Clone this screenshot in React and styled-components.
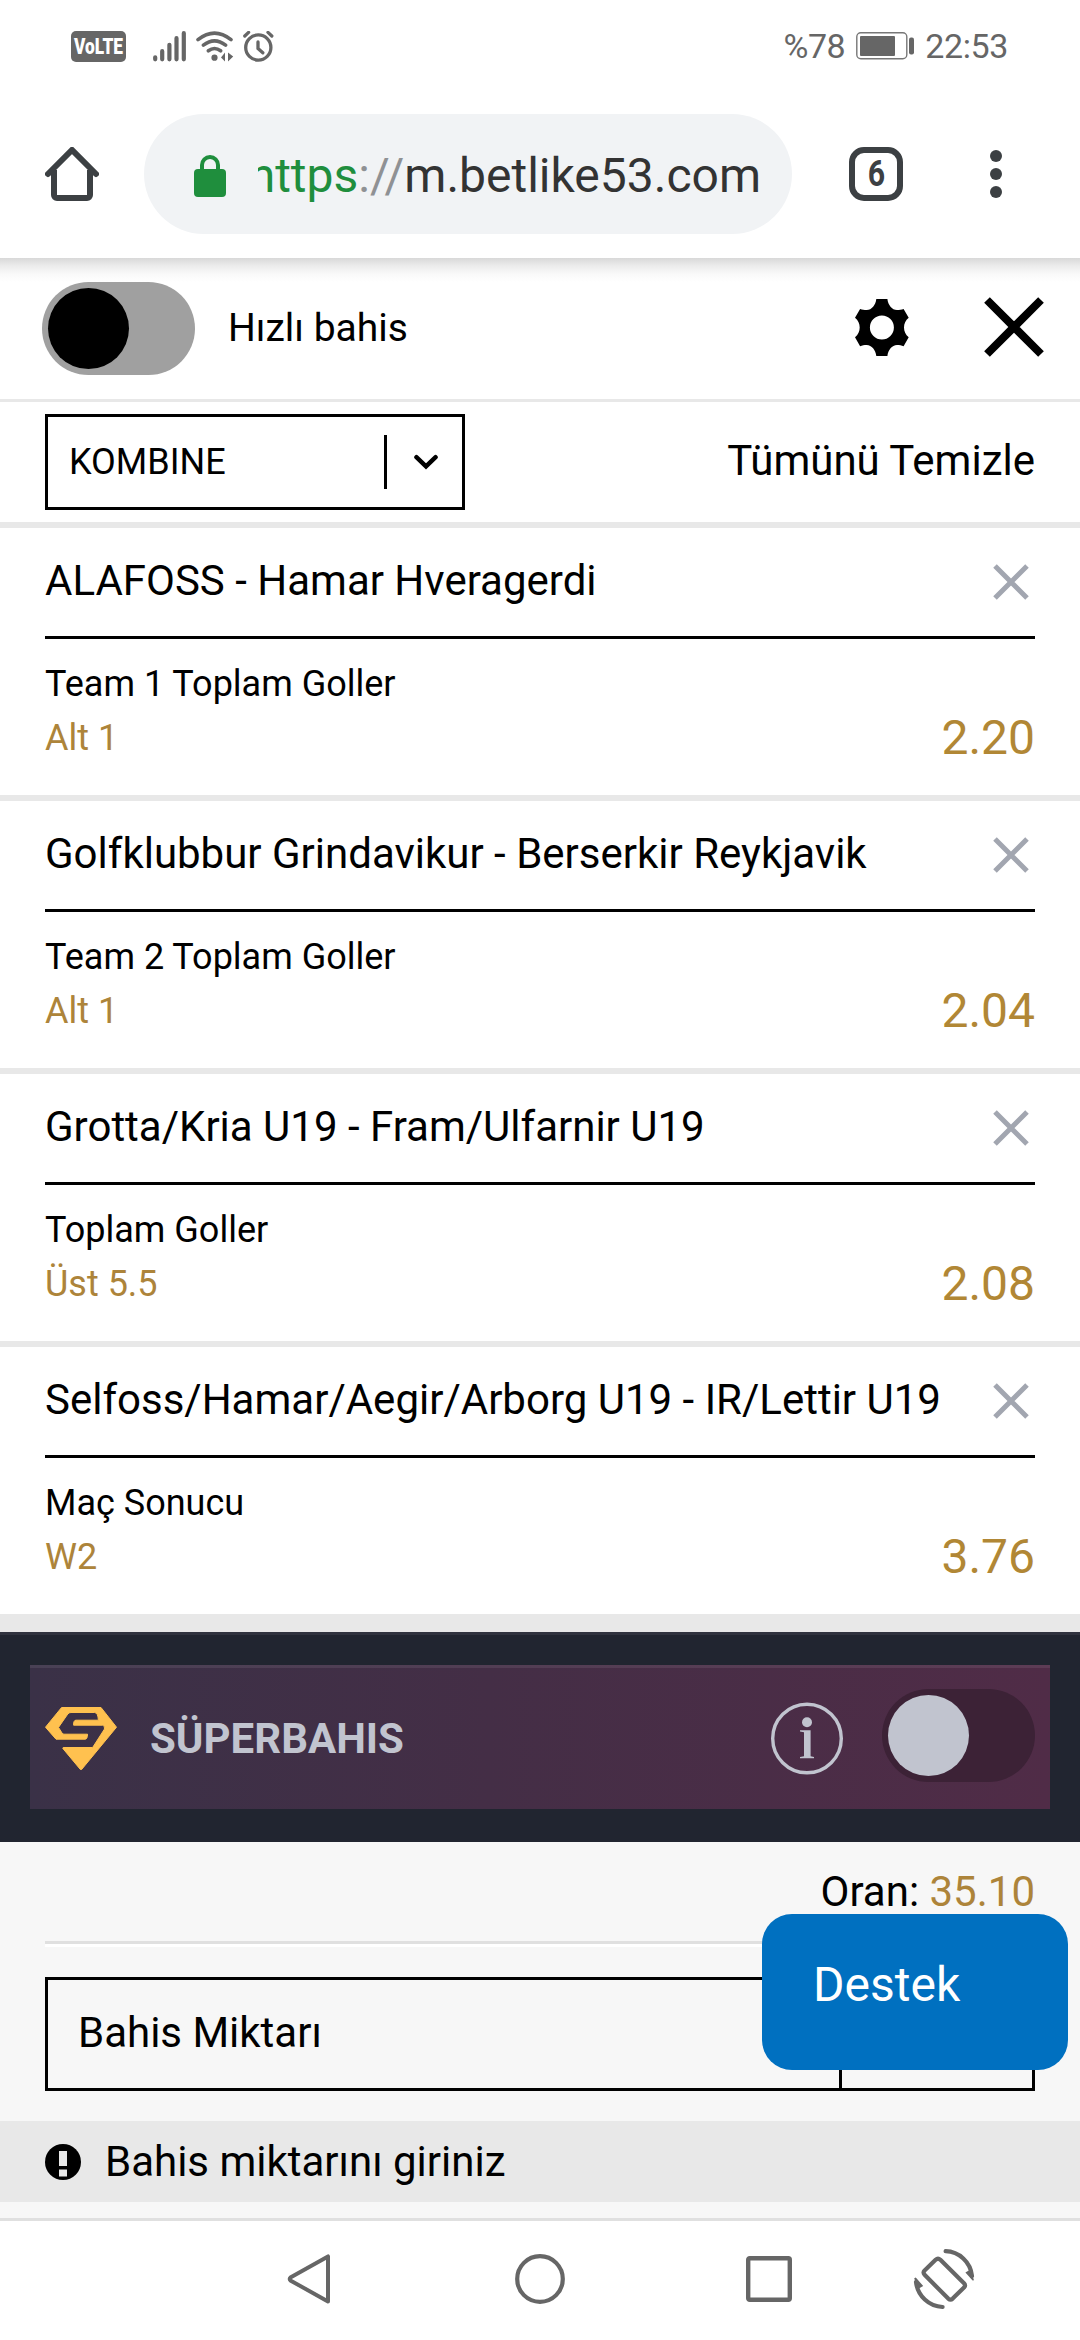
import React, { useState } from 'react';
import styled, { createGlobalStyle } from 'styled-components';

const GlobalStyle = createGlobalStyle`
    * {
        box-sizing: border-box;
    }

    body {
        margin: 0;
        background: #fff;
        font-family: Roboto, sans-serif;
        color: #000;
    }

    svg {
        display: block;
        flex: none;
    }
`;

// Styled Components
const Screen = styled.div`
    position: relative;
    width: 1080px;
    height: 2340px;
    overflow: hidden;
    background: #fff;
`;

const StatusBar = styled.div`
    display: flex;
    justify-content: space-between;
    align-items: center;
    height: 92px;
    padding: 0 72px 0 71px;
    color: #666;
    font-size: 34px;
    letter-spacing: -0.4px;
`;

const StatusGroup = styled.div`
    display: flex;
    align-items: center;
    gap: ${(props) => props.$gap}px;
`;

const SignalGroup = styled.div`
    padding-left: 18px;
`;

const BrowserBar = styled.div`
    display: flex;
    align-items: center;
    height: 166px;
    padding: 0 78px 2px 45px;
`;

const AddressBar = styled.div`
    display: flex;
    align-items: center;
    width: 648px;
    height: 120px;
    margin-left: 45px;
    padding: 3px 31px 0 50px;
    border-radius: 60px;
    background: #f1f3f5;
`;

/* Long address keeps its end visible, the start is cut */
const Address = styled.div`
    flex: 1;
    display: flex;
    justify-content: flex-end;
    overflow: hidden;
    margin-left: 32px;
    font-size: 48px;
    line-height: 60px;
    white-space: nowrap;
    color: #333;
`;

const Scheme = styled.span`
    color: #1f8e3d;
`;

const Slashes = styled.span`
    color: #8f9194;
`;

const TabCount = styled.div`
    display: flex;
    justify-content: center;
    align-items: center;
    width: 54px;
    height: 54px;
    margin-left: 57px;
    border: 6px solid #3c4043;
    border-radius: 15px;
    color: #3c4043;
    font-size: 36px;
    font-weight: 700;

    span {
        transform: scaleX(0.84);
    }
`;

const MenuDots = styled.div`
    display: flex;
    flex-direction: column;
    gap: 6px;
    margin-left: 87px;

    i {
        width: 12px;
        height: 12px;
        border-radius: 50%;
        background: #3c4043;
    }
`;

const QuickBetBar = styled.div`
    display: flex;
    align-items: center;
    height: 144px;
    padding: 0 36px 0 42px;
    border-bottom: 3px solid #e8e8e8;
    background: linear-gradient(to bottom, #d8d8d8 0, #ececec 8px, #f9f9f9 16px, #fff 24px);
`;

const Toggle = styled.button`
    display: flex;
    align-items: center;
    justify-content: ${(props) => (props.$on ? 'flex-end' : 'flex-start')};
    width: 153px;
    height: 93px;
    padding: 0 6px;
    border: none;
    border-radius: 46.5px;
    background: ${(props) => props.$track};
    cursor: pointer;

    &::before {
        content: '';
        width: 81px;
        height: 81px;
        border-radius: 50%;
        background: ${(props) => props.$knob};
    }
`;

const QuickBetLabel = styled.span`
    flex: 1;
    margin-left: 33px;
    padding-bottom: 2px;
    font-size: 39px;
`;

const HeaderIcons = styled.div`
    display: flex;
    align-items: center;
    gap: 75px;
    padding-bottom: 3px;
`;

const TypeBar = styled.div`
    display: flex;
    justify-content: space-between;
    align-items: center;
    height: 126px;
    padding: 0 45px;
    border-bottom: 6px solid #e8e8e8;
`;

const Select = styled.div`
    display: flex;
    align-items: center;
    width: 420px;
    height: 96px;
    padding: 0 24px 0 21px;
    border: 3px solid #000;
    font-size: 36px;
`;

const SelectValue = styled.span`
    flex: 1;
`;

const SelectDivider = styled.span`
    width: 3px;
    height: 54px;
    margin-right: 27px;
    background: #000;
`;

const ClearAll = styled.span`
    padding-bottom: 3px;
    font-size: 42px;
`;

const BetCard = styled.div`
    height: 273px;
    padding: 0 45px;
    border-bottom: 6px solid #e8e8e8;
`;

const BetTitle = styled.div`
    display: flex;
    justify-content: space-between;
    align-items: center;
    height: 111px;
    padding: 0 5px 3px 0;
    border-bottom: 3px solid #000;
    font-size: 42px;
    white-space: nowrap;

    svg {
        margin-top: 2px;
    }
`;

const BetBody = styled.div`
    display: flex;
    justify-content: space-between;
    align-items: flex-end;
    padding-top: 18px;
    font-size: 36px;
    line-height: 54px;
`;

const Pick = styled.div`
    color: #ad843a;
`;

const Odds = styled.div`
    color: #b18735;
    font-size: 48px;
    line-height: 54px;
`;

const ListEnd = styled.div`
    height: 12px;
    background: #e8e8e8;
`;

const SuperSection = styled.div`
    height: 210px;
    padding: 30px;
    border-top: 3px solid #30323e;
    background: #212530;
`;

const SuperPanel = styled.div`
    display: flex;
    align-items: center;
    height: 144px;
    padding: 0 15px;
    border-top: 3px solid rgba(255, 255, 255, 0.08);
    background: linear-gradient(to right, #3a3147, #442e46 45%, #502c47) border-box;
`;

const SuperLabel = styled.span`
    flex: 1;
    margin-left: 33px;
    color: #c1c4cf;
    font-size: 42px;
    font-weight: 700;
`;

const SuperToggle = styled(Toggle)`
    margin: 0 0 6px 39px;
`;

const StakeSection = styled.div`
    height: 279px;
    padding: 0 45px;
    background: #f7f7f7;
`;

const TotalRow = styled.div`
    display: flex;
    justify-content: flex-end;
    align-items: center;
    height: 102px;
    border-bottom: 3px solid #e0e0e0;
    box-shadow: 0 3px 0 #fff;
    font-size: 42px;
    white-space: pre;

    b {
        color: #ad843a;
        font-weight: 400;
    }
`;

const StakeField = styled.div`
    display: flex;
    align-items: center;
    height: 114px;
    margin-top: 33px;
    border: 3px solid #000;
    font-size: 42px;
`;

const StakeLabel = styled.span`
    flex: 1;
    padding: 0 0 3px 30px;
`;

const StakeSide = styled.span`
    width: 193px;
    height: 108px;
    border-left: 3px solid #000;
`;

const Notice = styled.div`
    display: flex;
    align-items: center;
    gap: 24px;
    height: 81px;
    padding: 0 45px;
    background: #e8e8e8;
    font-size: 42px;
`;

const NoticeFoot = styled.div`
    height: 19px;
    background: #f7f7f7;
    border-bottom: 3px solid #e0e0e0;
`;

const NavBar = styled.div`
    display: grid;
    grid-template-columns: 231px 232px 226px 124px;
    justify-items: center;
    align-items: center;
    height: 119px;
    padding: 0 0 3px 193px;
`;

const SupportButton = styled.button`
    position: absolute;
    left: 762px;
    top: 1914px;
    width: 306px;
    height: 156px;
    padding: 0 0 16px 51px;
    border: none;
    border-radius: 30px;
    background: #0070c0;
    color: #fff;
    font-family: inherit;
    font-size: 48px;
    text-align: left;
`;

// Icons
const VolteIcon = () => (
    <svg width="55" height="31" viewBox="0 0 55 31" overflow="visible">
        <rect width="55" height="31" rx="5" fill="#666" />
        <text
            x="3"
            y="23"
            fill="#fff"
            fontFamily="Roboto, sans-serif"
            fontWeight="900"
            fontSize="22.5"
            letterSpacing="0"
            textLength="49"
            lengthAdjust="spacingAndGlyphs"
        >
            VoLTE
        </text>
    </svg>
);

const SignalIcon = () => (
    <svg width="34" height="31" viewBox="0 0 34 31" stroke="#666" strokeWidth="4.2" strokeLinecap="round">
        <path d="M2.2 26.3v2M9.2 20.2v8.1M16.4 13.8v14.5M23.5 7.2v21.1M30.8 2.2v26.1" />
    </svg>
);

const WifiIcon = () => (
    <svg width="38" height="31" viewBox="0 0 38 31" fill="none" stroke="#666" strokeWidth="3.6" strokeLinecap="round">
        <path d="M2 8.6Q18.5-4.4 35 8.6M7.4 14.2Q18.5 5.5 29.6 14.2M12.4 19.8Q18.5 15.2 24.6 19.8" />
        <circle cx="18.5" cy="26.7" r="3.1" fill="#666" stroke="none" />
        <path d="M25 26.5l4-5v9zM32 21.5v9l5.2-5z" fill="#666" stroke="none" />
    </svg>
);

const AlarmIcon = () => (
    <svg width="31" height="31" viewBox="0 0 31 31" fill="none" stroke="#666" strokeWidth="3.3" strokeLinecap="round">
        <circle cx="15.3" cy="16.5" r="12.6" />
        <path d="M15 11v6.5l4.8 4.3M1.8 5l3.8-3.6M28.8 5L25 1.4" />
    </svg>
);

const BatteryIcon = () => (
    <svg width="58" height="28" viewBox="0 0 58 28">
        <rect x="0.8" y="0.8" width="50" height="26" rx="4" fill="none" stroke="#777" strokeWidth="1.4" />
        <rect x="4" y="4" width="35" height="20" rx="1" fill="#666" />
        <rect x="53" y="5.5" width="5" height="17" rx="2" fill="#666" />
    </svg>
);

const HomeIcon = () => (
    <svg width="54" height="54" viewBox="0 0 54 54" fill="none" stroke="#3c4043" strokeWidth="6">
        <path d="M3 27L27 3l24 24" strokeLinecap="round" />
        <path d="M9 23v25a3 3 0 0 0 3 3h30a3 3 0 0 0 3-3V23" />
    </svg>
);

const LockIcon = () => (
    <svg width="32" height="42" viewBox="0 0 32 42">
        <rect y="14" width="32" height="28" rx="4" fill="#1f8e3d" />
        <path d="M8 16v-6a8 8 0 0 1 16 0v6" fill="none" stroke="#1f8e3d" strokeWidth="4" />
    </svg>
);

const GearIcon = () => (
    <svg width="54" height="57" viewBox="0 0 54 57">
        <path
            fillRule="evenodd"
            d="M21.3 0H32.4C33 6 37 11 42 11C44.5 11 46.5 10.8 48.6 10L53.7 18.7C50.5 21 49 25 49 28.5C49 32 50.5 36 53.7 38.3L48.6 47.3C46.5 46.2 44.5 46 42 46C37 46 33 51 32.4 57H21.3C20.7 51 16.7 46 11.7 46C9.2 46 7.2 46.2 5.1 47.3L0 38.3C3.2 36 4.7 32 4.7 28.5C4.7 25 3.2 21 0 18.7L5.1 10C7.2 10.8 9.2 11 11.7 11C16.7 11 20.7 6 21.3 0ZM14.9 28.5a12 12 0 1 0 24 0a12 12 0 1 0 -24 0Z"
        />
    </svg>
);

const CrossIcon = ({ size, stroke, color }) => (
    <svg width={size} height={size} viewBox={`0 0 ${size} ${size}`} stroke={color} strokeWidth={stroke}>
        <path d={`M3 3L${size - 3} ${size - 3}M${size - 3} 3L3 ${size - 3}`} />
    </svg>
);

const ChevronIcon = () => (
    <svg width="24" height="16" viewBox="0 0 24 16" fill="none" stroke="#000" strokeWidth="4.4" strokeLinecap="round">
        <path d="M2.4 3.2L12 12.4l9.6-9.2" />
    </svg>
);

const SuperLogo = () => (
    <svg width="72" height="63" viewBox="0 0 72 63">
        <path
            fill="#ffc14f"
            stroke="#ffc14f"
            strokeWidth="1"
            strokeLinejoin="round"
            d="M16.6.5H56L71.5 20.2L36.6 62.5H35.4L17.8 41.4L18.2 40.5H47.6L59.5 22Q60 18.5 57.5 18.2H28.6Q28.4 13.2 31 13.2H53.4Q53 5.8 49.6 5.5H26Q24 5.5 22.8 7L13.5 20.4L17 26Q17.8 27.2 19 27.2H42.5Q42.5 32.2 40 32.2H11L.5 20.2Z"
        />
    </svg>
);

const InfoIcon = () => (
    <svg width="72" height="73" viewBox="0 0 72 73" fill="#c1c4cf">
        <circle cx="36" cy="36.5" r="34.3" fill="none" stroke="#c1c4cf" strokeWidth="3.4" />
        <circle cx="36" cy="20.2" r="5" />
        <path d="M29 28.2H39.6V54.2L43 55V56.2H29V55L33 54.2V30.2L29 29.4Z" />
    </svg>
);

const AlertIcon = () => (
    <svg width="36" height="36" viewBox="0 0 36 36">
        <circle cx="18" cy="18" r="18" />
        <path d="M14 7h8v15h-8zM14 25.5h8v7h-8z" fill="#e8e8e8" />
    </svg>
);

const BackIcon = () => (
    <svg width="44" height="50" viewBox="0 0 44 50" fill="none" stroke="#666" strokeWidth="4" strokeLinejoin="round">
        <path d="M41 2.4V47.6L3.4 26.4Q2 25 3.4 23.6Z" />
    </svg>
);

const CircleIcon = () => (
    <svg width="50" height="50" viewBox="0 0 50 50">
        <circle cx="25" cy="25" r="22.8" fill="none" stroke="#666" strokeWidth="4.2" />
    </svg>
);

const SquareIcon = () => (
    <svg width="46" height="46" viewBox="0 0 46 46">
        <rect x="2.2" y="2.2" width="41.6" height="41.6" rx="1.5" fill="none" stroke="#666" strokeWidth="4.4" />
    </svg>
);

const RotateIcon = () => (
    <svg width="62" height="62" viewBox="13 13 62 62" fill="none" stroke="#666" strokeWidth="4.2" strokeLinecap="round">
        <path
            d="M35.6 24.8L24.6 35.4Q22.6 37.6 24.6 39.8L48.2 63.6Q50.5 65.6 52.7 63.6L64 52.6Q66 50.4 64 48.2L40.4 24.8Q38 22.6 35.6 24.8Z"
            strokeLinejoin="round"
        />
        <path d="M45.6 16.2C59 16.6 70.6 27 72 41M42.6 72C29 71.4 17.6 61 16 47" />
        <path d="M65.4 37.5L70.5 34.6L74 45.2L72.6 45.6ZM23.2 51L18 54L14.2 43.2L15.8 42.6Z" fill="#666" stroke="none" />
    </svg>
);

const bets = [
    { match: 'ALAFOSS - Hamar Hveragerdi', market: 'Team 1 Toplam Goller', pick: 'Alt 1', odds: '2.20' },
    { match: 'Golfklubbur Grindavikur - Berserkir Reykjavik', market: 'Team 2 Toplam Goller', pick: 'Alt 1', odds: '2.04' },
    { match: 'Grotta/Kria U19 - Fram/Ulfarnir U19', market: 'Toplam Goller', pick: 'Üst 5.5', odds: '2.08' },
    { match: 'Selfoss/Hamar/Aegir/Arborg U19 - IR/Lettir U19', market: 'Maç Sonucu', pick: 'W2', odds: '3.76' },
];

const BetSlip = () => {
    const [quickBet, setQuickBet] = useState(false);
    const [superBet, setSuperBet] = useState(false);

    return (
        <>
            <QuickBetBar>
                <Toggle $on={quickBet} $track="#a0a0a0" $knob="#000" onClick={() => setQuickBet(!quickBet)} />
                <QuickBetLabel>Hızlı bahis</QuickBetLabel>
                <HeaderIcons>
                    <GearIcon />
                    <CrossIcon size={60} stroke={8} color="#000" />
                </HeaderIcons>
            </QuickBetBar>

            <TypeBar>
                <Select>
                    <SelectValue>KOMBINE</SelectValue>
                    <SelectDivider />
                    <ChevronIcon />
                </Select>
                <ClearAll>Tümünü Temizle</ClearAll>
            </TypeBar>

            {bets.map((bet) => (
                <BetCard key={bet.match}>
                    <BetTitle>
                        {bet.match}
                        <CrossIcon size={38} stroke={5} color="#a2a6b0" />
                    </BetTitle>
                    <BetBody>
                        <div>
                            <div>{bet.market}</div>
                            <Pick>{bet.pick}</Pick>
                        </div>
                        <Odds>{bet.odds}</Odds>
                    </BetBody>
                </BetCard>
            ))}
            <ListEnd />

            <SuperSection>
                <SuperPanel>
                    <SuperLogo />
                    <SuperLabel>SÜPERBAHIS</SuperLabel>
                    <InfoIcon />
                    <SuperToggle $on={superBet} $track="#3c2236" $knob="#c1c4cf" onClick={() => setSuperBet(!superBet)} />
                </SuperPanel>
            </SuperSection>

            <StakeSection>
                <TotalRow>
                    Oran: <b>35.10</b>
                </TotalRow>
                <StakeField>
                    <StakeLabel>Bahis Miktarı</StakeLabel>
                    <StakeSide />
                </StakeField>
            </StakeSection>
            <Notice>
                <AlertIcon />
                Bahis miktarını giriniz
            </Notice>
            <NoticeFoot />
        </>
    );
};

const App = () => {
    return (
        <Screen>
            <GlobalStyle />
            <StatusBar>
                <StatusGroup $gap={9}>
                    <VolteIcon />
                    <SignalGroup>
                        <SignalIcon />
                    </SignalGroup>
                    <WifiIcon />
                    <AlarmIcon />
                </StatusGroup>
                <StatusGroup $gap={11}>
                    <span>%78</span>
                    <BatteryIcon />
                    <span>22:53</span>
                </StatusGroup>
            </StatusBar>

            <BrowserBar>
                <HomeIcon />
                <AddressBar>
                    <LockIcon />
                    <Address>
                        <Scheme>https</Scheme>
                        <Slashes>://</Slashes>
                        <span>m.betlike53.com</span>
                    </Address>
                </AddressBar>
                <TabCount>
                    <span>6</span>
                </TabCount>
                <MenuDots>
                    <i />
                    <i />
                    <i />
                </MenuDots>
            </BrowserBar>

            <BetSlip />

            <NavBar>
                <BackIcon />
                <CircleIcon />
                <SquareIcon />
                <RotateIcon />
            </NavBar>

            <SupportButton>Destek</SupportButton>
        </Screen>
    );
};

export default App;
